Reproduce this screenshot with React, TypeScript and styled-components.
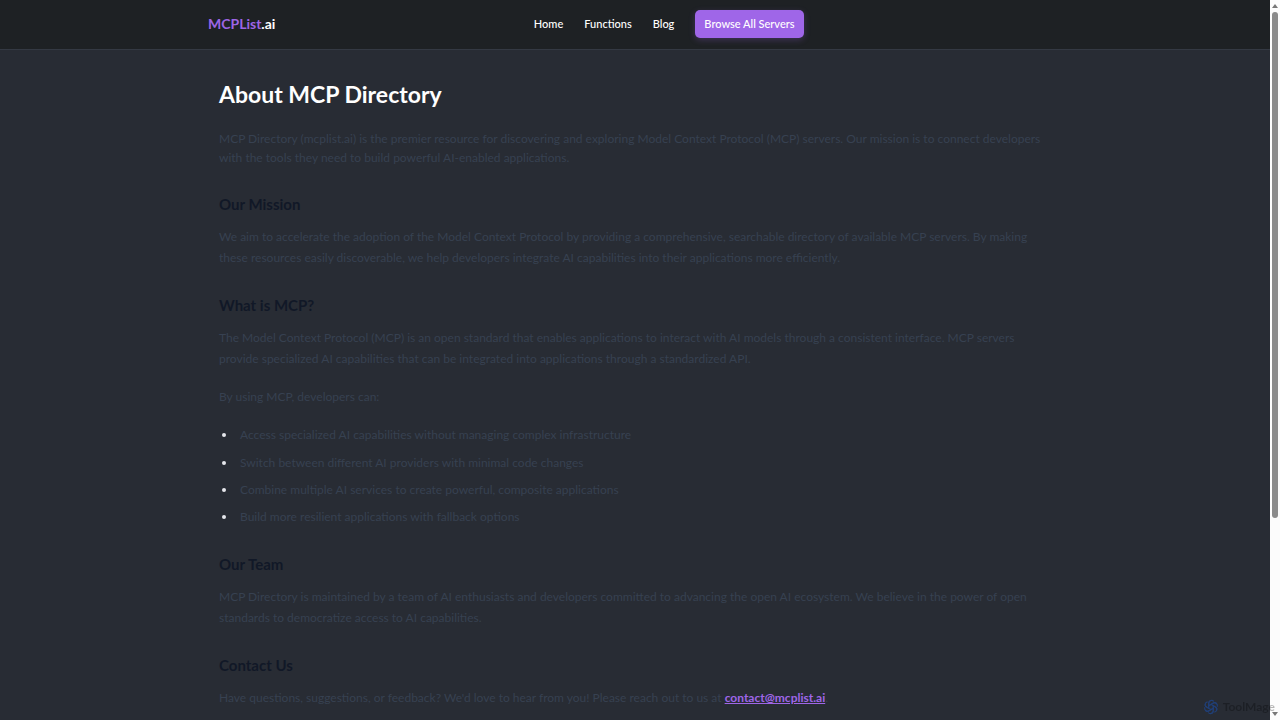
import React from "react";
import styled, { createGlobalStyle } from "styled-components";

const GlobalStyle = createGlobalStyle`
  * { box-sizing: border-box; }
  body {
    margin: 0;
    background: #282c34;
    font-family: Lato, "Open Sans", sans-serif;
  }
`;

const Shell = styled.div`
  display: grid;
  grid-template-columns: minmax(0, 1fr) 10px;
  height: 100vh;
  background: #282c34;
`;

const Page = styled.div`
  overflow-y: auto;
  scrollbar-width: none;
`;

const Header = styled.header`
  padding-bottom: 1px;
  background: #1e2124;
  border-bottom: 1px solid #343943;
`;

const HeaderInner = styled.div`
  display: flex;
  align-items: center;
  justify-content: space-between;
  max-width: 854px;
  height: 48px;
  margin: 0 auto;
`;

const Brand = styled.a`
  color: #fff;
  font-size: 14px;
  font-weight: 700;
  line-height: 20px;
  text-decoration: none;
`;

const BrandAccent = styled.span`
  color: #9d65e5;
`;

const Nav = styled.nav`
  display: flex;
  align-items: center;
  gap: 21px;
`;

const NavLink = styled.a`
  color: #fff;
  font-size: 11px;
  font-weight: 500;
  line-height: 16px;
  text-decoration: none;
`;

const BrowseButton = styled.button`
  height: 28px;
  padding: 0 9px;
  border: 0;
  border-radius: 5px;
  background: #9f66e8;
  box-shadow: 0 2px 6px rgba(159, 102, 232, 0.25);
  color: #fff;
  font: 500 11px/16px Lato, sans-serif;
`;

const Actions = styled.div``;

const Main = styled.main`
  max-width: 854px;
  margin: 0 auto;
  padding: 31px 11px;
`;

const Title = styled.h1`
  margin: 0 0 21px;
  color: #fff;
  font-size: 23px;
  font-weight: 700;
  line-height: 27px;
`;

const Lead = styled.p`
  margin: 0 0 27px;
  color: #374151;
  font-size: 12px;
  line-height: 19px;
`;

const SectionTitle = styled.h2`
  margin: 0 0 11px;
  color: #111827;
  font-size: 15px;
  font-weight: 700;
  line-height: 21px;
`;

const Text = styled.p`
  margin: 0 0 17px;
  color: #374151;
  font-size: 12px;
  line-height: 21px;
`;

const Section = styled.section`
  margin-bottom: 27px;
`;

const List = styled.ul`
  display: flex;
  flex-direction: column;
  gap: 6px;
  margin: 0;
  padding-left: 18px;
  color: #374151;
  font-size: 12px;
  line-height: 21px;
`;

const Item = styled.li`
  padding-left: 3px;

  &:first-child { padding-bottom: 1px; }
  &::marker { color: #e5e7eb; }
`;

const MailLink = styled.a`
  color: #9f66e8;
  font-weight: 700;
  text-decoration: underline;
`;

const ScrollTrack = styled.div`
  display: flex;
  flex-direction: column;
  align-items: center;
  justify-content: space-between;
  padding: 4px 0;
  background: #fcfcfc;
`;

const Thumb = styled.div`
  flex: 0 1 71%;
  width: 6px;
  margin-bottom: auto;
  margin-top: 4px;
  border-radius: 3px;
  background: #8b8b8b;
`;

const Watermark = styled.div`
  position: fixed;
  right: 5px;
  bottom: 4px;
  display: flex;
  align-items: center;
  gap: 4px;
  color: rgba(0, 0, 0, 0.28);
  font-size: 12px;
  font-weight: 700;
  line-height: 18px;
`;

function Arrow({ down }: { down?: boolean }) {
  return (
    <svg width="6" height="4" viewBox="0 0 6 4" aria-hidden="true">
      <path d={down ? "M0 0h6L3 4z" : "M0 4h6L3 0z"} fill="#777" />
    </svg>
  );
}

function KnotLogo() {
  return (
    <svg width="16" height="16" viewBox="0 0 24 24" fill="none" stroke="#213f76" strokeWidth="1.7" aria-hidden="true">
      {[0, 60, 120, 180, 240, 300].map((angle) => (
        <path
          key={angle}
          d="M8.6 14V6.2a4.2 4.2 0 0 1 7.6-2.4M8.6 10l6.6-3.8a4.2 4.2 0 0 1 5.4 1.2"
          transform={`rotate(${angle} 12 12)`}
        />
      ))}
    </svg>
  );
}

export default function App() {
  return (
    <>
      <GlobalStyle />
      <Shell>
        <Page>
          <Header>
            <HeaderInner>
              <Brand href="#"><BrandAccent>MCPList</BrandAccent>.ai</Brand>
              <Nav>
                <NavLink href="#">Home</NavLink>
                <NavLink href="#">Functions</NavLink>
                <NavLink href="#">Blog</NavLink>
                <BrowseButton type="button">Browse All Servers</BrowseButton>
              </Nav>
              <Actions />
            </HeaderInner>
          </Header>
          <Main>
            <Title>About MCP Directory</Title>
            <Lead>
              MCP Directory (mcplist.ai) is the premier resource for discovering and exploring Model Context Protocol (MCP) servers. Our mission is to connect developers
              with the tools they need to build powerful AI-enabled applications.
            </Lead>
            <Section>
              <SectionTitle>Our Mission</SectionTitle>
              <Text>
                We aim to accelerate the adoption of the Model Context Protocol by providing a comprehensive, searchable directory of available MCP servers. By making
                <br />
                these resources easily discoverable, we help developers integrate AI capabilities into their applications more efficiently.
              </Text>
            </Section>
            <Section>
              <SectionTitle>What is MCP?</SectionTitle>
              <Text>
                The Model Context Protocol (MCP) is an open standard that enables applications to interact with AI models through a consistent interface. MCP servers
                provide specialized AI capabilities that can be integrated into applications through a standardized API.
              </Text>
              <Text>By using MCP, developers can:</Text>
              <List>
                <Item>Access specialized AI capabilities without managing complex infrastructure</Item>
                <Item>Switch between different AI providers with minimal code changes</Item>
                <Item>Combine multiple AI services to create powerful, composite applications</Item>
                <Item>Build more resilient applications with fallback options</Item>
              </List>
            </Section>
            <Section>
              <SectionTitle>Our Team</SectionTitle>
              <Text>
                MCP Directory is maintained by a team of AI enthusiasts and developers committed to advancing the open AI ecosystem. We believe in the power of open
                standards to democratize access to AI capabilities.
              </Text>
            </Section>
            <Section>
              <SectionTitle>Contact Us</SectionTitle>
              <Text>
                Have questions, suggestions, or feedback? We'd love to hear from you! Please reach out to us at{" "}
                <MailLink href="mailto:contact@mcplist.ai">contact@mcplist.ai</MailLink>.
              </Text>
            </Section>
          </Main>
        </Page>
        <ScrollTrack>
          <Arrow />
          <Thumb />
          <Arrow down />
        </ScrollTrack>
      </Shell>
      <Watermark>
        <KnotLogo />
        ToolMage
      </Watermark>
    </>
  );
}
